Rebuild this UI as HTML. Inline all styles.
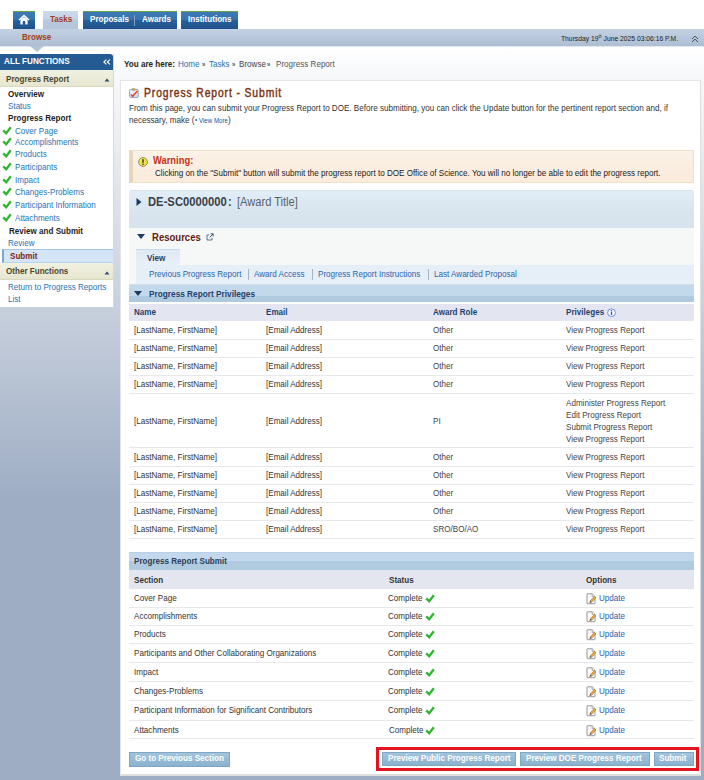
<!DOCTYPE html>
<html><head><meta charset="utf-8">
<style>
*{box-sizing:border-box}
html,body{margin:0;padding:0}
body{width:704px;height:780px;overflow:hidden;position:relative;font-family:"Liberation Sans",sans-serif;font-size:8px;color:#333;
background:linear-gradient(to bottom,#ffffff 0px,#ffffff 46px,#fafbfc 62px,#f5f6f8 90px,#9eadc4 500px,#9eadc4 780px)}
.abs{position:absolute}
.t{position:absolute;white-space:nowrap;line-height:1;transform-origin:0 0}
.b{font-weight:bold}
.lnk{color:#2474b4}
.dark{color:#222}
</style></head>
<body>
<div class="abs" style="left:13px;top:11px;width:22px;height:18px;background:linear-gradient(#3e79b4 0,#3673ae 45%,#28609a 50%,#1f5189 100%);border-top:1px solid #62a646"></div>
<svg class="abs" style="left:18px;top:14px" width="12" height="11" viewBox="0 0 12 11"><path d="M6 0.5 L0.5 5.5 L1.6 6.4 L6 2.4 L10.4 6.4 L11.5 5.5 Z" fill="#fff"/><path d="M2.4 6 L6 2.9 L9.6 6 V10.5 H7.3 V8 A1.3 1.3 0 0 0 4.7 8 V10.5 H2.4 Z" fill="#fff"/></svg>
<div class="abs" style="left:43px;top:11px;width:35px;height:18px;background:linear-gradient(#cbdaec 0,#c3d3e7 45%,#b8c9de 50%,#b4c4da 100%)"></div>
<div class="t b" style="left:49.70px;top:14.00px;font-size:9.50px;transform:scaleX(0.850);color:#a23d1a">Tasks</div>
<div class="abs" style="left:83px;top:11px;width:94px;height:18px;background:linear-gradient(#3e79b4 0,#3673ae 45%,#28609a 50%,#1f5189 100%);border-top:1px solid #62a646"></div>
<div class="t b" style="left:89.70px;top:14.00px;font-size:9.50px;transform:scaleX(0.850);color:#fff">Proposals</div>
<div class="abs" style="left:134px;top:15px;width:1px;height:11px;background:#7fa3c8"></div>
<div class="t b" style="left:141.70px;top:14.00px;font-size:9.50px;transform:scaleX(0.850);color:#fff">Awards</div>
<div class="abs" style="left:181px;top:11px;width:57px;height:18px;background:linear-gradient(#3e79b4 0,#3673ae 45%,#28609a 50%,#1f5189 100%);border-top:1px solid #62a646"></div>
<div class="t b" style="left:188.00px;top:14.00px;font-size:9.50px;transform:scaleX(0.850);color:#fff">Institutions</div>
<div class="abs" style="left:0px;top:29px;width:704px;height:17px;background:linear-gradient(#c3d1e3,#adbed4)"></div>
<div class="abs" style="left:0px;top:46px;width:704px;height:1px;background:#e4e9ef"></div>
<div class="t b" style="left:22.30px;top:32.00px;font-size:9.50px;transform:scaleX(0.850);color:#a23d1a">Browse</div>
<div class="t " style="left:561.00px;top:35.00px;font-size:7.95px;transform:scaleX(0.850);color:#222">Thursday 19<sup style="font-size:4.5px;vertical-align:3px">th</sup> June 2025 03:06:16 P.M.</div>
<svg class="abs" style="left:691px;top:35px" width="8" height="8" viewBox="0 0 8 8"><path d="M1 4 L4 1.2 L7 4 M1 7 L4 4.2 L7 7" stroke="#3a3a3a" stroke-width="0.85" fill="none"/></svg>
<svg class="abs" style="left:30px;top:46px" width="14" height="6" viewBox="0 0 14 6"><path d="M0 0 L14 0 L7 6 Z" fill="#b3c3d8"/></svg>
<div class="abs" style="left:0px;top:54px;width:114px;height:253px;background:#fff;border-right:1px solid #d5d9de"></div>
<div class="abs" style="left:0px;top:54px;width:113px;height:15.5px;background:#245b93;border-top-right-radius:3px"></div>
<div class="t b" style="left:3.75px;top:56.00px;font-size:9.62px;transform:scaleX(0.850);color:#fff">ALL FUNCTIONS</div>
<svg class="abs" style="left:102.5px;top:58.5px" width="8" height="6" viewBox="0 0 8 6"><path d="M3.4 0.6 L0.8 3 L3.4 5.4 M6.9 0.6 L4.3 3 L6.9 5.4" stroke="#fff" stroke-width="1.15" fill="none"/></svg>
<div class="abs" style="left:0px;top:69.5px;width:113px;height:17.8px;background:linear-gradient(#f1f1e1,#e6e6d0);border-bottom:1px solid #d9d9c0"></div>
<div class="t b" style="left:5.60px;top:74.00px;font-size:9.50px;transform:scaleX(0.850);color:#4a4630">Progress Report</div>
<svg class="abs" style="left:103.5px;top:77.5px" width="6" height="4"><path d="M0.5 3.5 L3 0.5 L5.5 3.5Z" fill="#2a4a70"/></svg>
<div class="t b" style="left:8.00px;top:89.00px;font-size:9.50px;transform:scaleX(0.850);color:#1e1e1e">Overview</div>
<div class="t " style="left:8.00px;top:101.00px;font-size:9.50px;transform:scaleX(0.850);color:#2474b4">Status</div>
<div class="t b" style="left:8.00px;top:113.00px;font-size:9.50px;transform:scaleX(0.850);color:#1e1e1e">Progress Report</div>
<div class="t " style="left:15.10px;top:126.00px;font-size:9.50px;transform:scaleX(0.850);color:#2474b4">Cover Page</div>
<svg class="abs" style="left:2px;top:125.6px" width="10" height="9" viewBox="0 0 10 9"><path d="M1.2 4.4 L4.2 7.2 L8.8 1.2" stroke="#2fb52f" stroke-width="2.3" fill="none" stroke-linejoin="miter"/></svg>
<div class="t " style="left:15.10px;top:137.00px;font-size:9.50px;transform:scaleX(0.850);color:#2474b4">Accomplishments</div>
<svg class="abs" style="left:2px;top:137.3px" width="10" height="9" viewBox="0 0 10 9"><path d="M1.2 4.4 L4.2 7.2 L8.8 1.2" stroke="#2fb52f" stroke-width="2.3" fill="none" stroke-linejoin="miter"/></svg>
<div class="t " style="left:15.10px;top:149.00px;font-size:9.50px;transform:scaleX(0.850);color:#2474b4">Products</div>
<svg class="abs" style="left:2px;top:149.2px" width="10" height="9" viewBox="0 0 10 9"><path d="M1.2 4.4 L4.2 7.2 L8.8 1.2" stroke="#2fb52f" stroke-width="2.3" fill="none" stroke-linejoin="miter"/></svg>
<div class="t " style="left:15.10px;top:162.00px;font-size:9.50px;transform:scaleX(0.850);color:#2474b4">Participants</div>
<svg class="abs" style="left:2px;top:161.7px" width="10" height="9" viewBox="0 0 10 9"><path d="M1.2 4.4 L4.2 7.2 L8.8 1.2" stroke="#2fb52f" stroke-width="2.3" fill="none" stroke-linejoin="miter"/></svg>
<div class="t " style="left:15.10px;top:175.00px;font-size:9.50px;transform:scaleX(0.850);color:#2474b4">Impact</div>
<svg class="abs" style="left:2px;top:174.6px" width="10" height="9" viewBox="0 0 10 9"><path d="M1.2 4.4 L4.2 7.2 L8.8 1.2" stroke="#2fb52f" stroke-width="2.3" fill="none" stroke-linejoin="miter"/></svg>
<div class="t " style="left:15.10px;top:187.00px;font-size:9.50px;transform:scaleX(0.850);color:#2474b4">Changes-Problems</div>
<svg class="abs" style="left:2px;top:187.3px" width="10" height="9" viewBox="0 0 10 9"><path d="M1.2 4.4 L4.2 7.2 L8.8 1.2" stroke="#2fb52f" stroke-width="2.3" fill="none" stroke-linejoin="miter"/></svg>
<div class="t " style="left:15.10px;top:200.00px;font-size:9.50px;transform:scaleX(0.850);color:#2474b4">Participant Information</div>
<svg class="abs" style="left:2px;top:199.7px" width="10" height="9" viewBox="0 0 10 9"><path d="M1.2 4.4 L4.2 7.2 L8.8 1.2" stroke="#2fb52f" stroke-width="2.3" fill="none" stroke-linejoin="miter"/></svg>
<div class="t " style="left:15.10px;top:213.00px;font-size:9.50px;transform:scaleX(0.850);color:#2474b4">Attachments</div>
<svg class="abs" style="left:2px;top:212.8px" width="10" height="9" viewBox="0 0 10 9"><path d="M1.2 4.4 L4.2 7.2 L8.8 1.2" stroke="#2fb52f" stroke-width="2.3" fill="none" stroke-linejoin="miter"/></svg>
<div class="t b" style="left:8.50px;top:226.00px;font-size:9.50px;transform:scaleX(0.850);color:#1e1e1e">Review and Submit</div>
<div class="t " style="left:7.70px;top:238.00px;font-size:9.50px;transform:scaleX(0.850);color:#2474b4">Review</div>
<div class="abs" style="left:2px;top:249px;width:111px;height:13.5px;background:#d5e5f8;border-top:1px solid #a9c4e4;border-bottom:1px solid #bcd3ee;border-left:2px solid #7ea6d4"></div>
<div class="t b" style="left:10.20px;top:251.00px;font-size:9.50px;transform:scaleX(0.850);color:#7a1c1c">Submit</div>
<div class="abs" style="left:0px;top:262.5px;width:113px;height:17.5px;background:linear-gradient(#f1f1e1,#e6e6d0);border-bottom:1px solid #d9d9c0"></div>
<div class="t b" style="left:5.50px;top:266.00px;font-size:9.50px;transform:scaleX(0.850);color:#4a4630">Other Functions</div>
<svg class="abs" style="left:103.5px;top:270.5px" width="6" height="4"><path d="M0.5 3.5 L3 0.5 L5.5 3.5Z" fill="#2a4a70"/></svg>
<div class="t " style="left:7.70px;top:282.00px;font-size:9.50px;transform:scaleX(0.850);color:#2474b4">Return to Progress Reports</div>
<div class="t " style="left:7.70px;top:294.00px;font-size:9.50px;transform:scaleX(0.850);color:#2474b4">List</div>
<div class="t b" style="left:124.10px;top:59.00px;font-size:9.50px;transform:scaleX(0.850);color:#222">You are here:</div>
<div class="t " style="left:178.00px;top:59.00px;font-size:9.50px;transform:scaleX(0.850);color:#2474b4">Home</div>
<div class="t " style="left:201.50px;top:59.00px;font-size:9.50px;transform:scaleX(0.850);"><span style="font-size:7px;color:#555;font-weight:bold">&raquo;</span></div>
<div class="t " style="left:209.00px;top:59.00px;font-size:9.50px;transform:scaleX(0.850);color:#2474b4">Tasks</div>
<div class="t " style="left:231.60px;top:59.00px;font-size:9.50px;transform:scaleX(0.850);"><span style="font-size:7px;color:#555;font-weight:bold">&raquo;</span></div>
<div class="t " style="left:239.00px;top:59.00px;font-size:9.50px;transform:scaleX(0.850);color:#444">Browse</div>
<div class="t " style="left:267.00px;top:59.00px;font-size:9.50px;transform:scaleX(0.850);"><span style="font-size:7px;color:#555;font-weight:bold">&raquo;</span></div>
<div class="t " style="left:275.70px;top:59.00px;font-size:9.50px;transform:scaleX(0.850);color:#555">Progress Report</div>
<div class="abs" style="left:120px;top:80px;width:581px;height:696px;background:#fff;border:1px solid rgba(0,0,0,0.10);border-right:1px solid rgba(0,0,0,0.12);border-bottom:2px solid rgba(0,0,0,0.12)"></div>
<svg class="abs" style="left:128.8px;top:88px" width="10" height="10" viewBox="0 0 10 10">
<defs><linearGradient id="cb" x1="0" y1="0" x2="1" y2="1"><stop offset="0" stop-color="#f4f8fd"/><stop offset="1" stop-color="#c8daf0"/></linearGradient></defs>
<rect x="0.6" y="1.4" width="8.6" height="8.2" rx="1" fill="url(#cb)" stroke="#7f9dc8" stroke-width="0.9"/>
<rect x="2.6" y="0.2" width="4" height="2.6" rx="1.1" fill="#bba45e"/>
<path d="M1.9 6.4 L3.7 8.3 L8.4 3.1" stroke="#e4462a" stroke-width="1.5" fill="none"/></svg>
<div class="t" style="left:144.3px;top:87px;font-size:12px;transform:scaleX(0.86);letter-spacing:1.05px;color:#7c3515;-webkit-text-stroke:0.45px #7c3515">Progress Report - Submit</div>
<div class="t " style="left:129.00px;top:103.00px;font-size:9.50px;transform:scaleX(0.850);color:#333">From this page, you can submit your Progress Report to DOE. Before submitting, you can click the Update button for the pertinent report section and, if</div>
<div class="t " style="left:128.75px;top:115.00px;font-size:9.50px;transform:scaleX(0.850);color:#333">necessary, make (</div>
<div class="t " style="left:194.80px;top:117.00px;font-size:7.12px;transform:scaleX(0.850);color:#2a5aa0">&bull;</div>
<div class="t " style="left:199.10px;top:117.00px;font-size:7.24px;transform:scaleX(0.850);color:#22509a">View More</div>
<div class="t " style="left:228.20px;top:115.00px;font-size:9.50px;transform:scaleX(0.850);color:#333">)</div>
<div class="abs" style="left:129px;top:149.5px;width:565px;height:33px;background:linear-gradient(#fbf1e6,#faebdb);border:1px solid #f1dfca;border-left:4px solid #e9d5bd"></div>
<svg class="abs" style="left:138px;top:157px" width="10" height="10" viewBox="0 0 10 10">
<circle cx="5" cy="5" r="4.4" fill="#f2e24a" stroke="#8a8a50" stroke-width="0.9"/>
<rect x="4.3" y="2.2" width="1.4" height="3.6" fill="#333"/><rect x="4.3" y="6.6" width="1.4" height="1.3" fill="#333"/></svg>
<div class="t b" style="left:153.20px;top:155.00px;font-size:11.04px;transform:scaleX(0.850);color:#c33218">Warning:</div>
<div class="t " style="left:155.00px;top:168.00px;font-size:9.50px;transform:scaleX(0.850);color:#222">Clicking on the "Submit" button will submit the progress report to DOE Office of Science. You will no longer be able to edit the progress report.</div>
<div class="abs" style="left:129px;top:190px;width:565px;height:37.5px;background:linear-gradient(#e1eef8 0,#d8e5ef 55%,#d7e3ee 100%);border-top:1px solid #d6e2ec;border-radius:3px 3px 0 0"></div>
<svg class="abs" style="left:136px;top:198px" width="6" height="8" viewBox="0 0 6 8"><path d="M0.5 0 L5.5 4 L0.5 8 Z" fill="#1d3a60"/></svg>
<div class="t b" style="left:148.30px;top:195.00px;font-size:13.24px;transform:scaleX(0.850);color:#3a3f48">DE-SC0000000</div>
<div class="t b" style="left:227.80px;top:195.00px;font-size:13.06px;transform:scaleX(0.850);color:#3a3f48">:</div>
<div class="t " style="left:237.20px;top:195.00px;font-size:13.06px;transform:scaleX(0.850);color:#56606a">[Award Title]</div>
<div class="abs" style="left:129px;top:227.5px;width:565px;height:57px;background:#f6f8f7"></div>
<svg class="abs" style="left:137px;top:234px" width="8" height="5" viewBox="0 0 8 5"><path d="M0 0 L8 0 L4 5 Z" fill="#1d3a60"/></svg>
<div class="t b" style="left:151.50px;top:232.00px;font-size:11.22px;transform:scaleX(0.850);color:#621c0e">Resources</div>
<svg class="abs" style="left:206px;top:233px" width="8" height="8" viewBox="0 0 8 8">
<path d="M3.2 2 H1 V7 H6 V4.8" stroke="#4a6680" stroke-width="0.9" fill="none"/>
<path d="M4.6 0.8 H7.2 V3.4 M7 1 L3.6 4.4" stroke="#3a5a78" stroke-width="1" fill="none"/></svg>
<div class="abs" style="left:136px;top:249px;width:44px;height:16px;background:linear-gradient(#dfe9f4,#e8f0f8);border-top:1px solid #c8daee"></div>
<div class="t b" style="left:147.00px;top:253.00px;font-size:9.50px;transform:scaleX(0.850);color:#2b3d5c">View</div>
<div class="abs" style="left:136px;top:265px;width:558px;height:19px;background:#e6eff8"></div>
<div class="t " style="left:148.60px;top:269.00px;font-size:9.50px;transform:scaleX(0.850);color:#2b64a8">Previous Progress Report</div>
<div class="abs" style="left:248px;top:269px;width:1px;height:11px;background:#a8b4c0"></div>
<div class="t " style="left:254.00px;top:269.00px;font-size:9.50px;transform:scaleX(0.850);color:#2b64a8">Award Access</div>
<div class="abs" style="left:312px;top:269px;width:1px;height:11px;background:#a8b4c0"></div>
<div class="t " style="left:318.40px;top:269.00px;font-size:9.50px;transform:scaleX(0.850);color:#2b64a8">Progress Report Instructions</div>
<div class="abs" style="left:428px;top:269px;width:1px;height:11px;background:#a8b4c0"></div>
<div class="t " style="left:434.30px;top:269.00px;font-size:9.50px;transform:scaleX(0.850);color:#2b64a8">Last Awarded Proposal</div>
<div class="abs" style="left:129px;top:284px;width:565px;height:18px;background:linear-gradient(#c2d8eb 0,#c2d8eb 11px,#afc9df 11px,#afc9df 18px);border-top:1px solid #d5dde5"></div>
<svg class="abs" style="left:134px;top:291px" width="8" height="5" viewBox="0 0 8 5"><path d="M0 0 L8 0 L4 5 Z" fill="#1d3a60"/></svg>
<div class="t b" style="left:149.30px;top:289.00px;font-size:9.73px;transform:scaleX(0.850);color:#22406a">Progress Report Privileges</div>
<div class="abs" style="left:129px;top:303.6px;width:565px;height:17.6px;background:#e3e5f0"></div>
<div class="t b" style="left:134.10px;top:307.00px;font-size:9.50px;transform:scaleX(0.850);color:#1f3f6f">Name</div>
<div class="t b" style="left:265.50px;top:307.00px;font-size:9.50px;transform:scaleX(0.850);color:#1f3f6f">Email</div>
<div class="t b" style="left:432.50px;top:307.00px;font-size:9.50px;transform:scaleX(0.850);color:#1f3f6f">Award Role</div>
<div class="t b" style="left:566.00px;top:307.00px;font-size:9.50px;transform:scaleX(0.850);color:#1f3f6f">Privileges</div>
<svg class="abs" style="left:606.5px;top:308px" width="9" height="9" viewBox="0 0 9 9"><circle cx="4.5" cy="4.7" r="3.9" fill="#f4f6fc" stroke="#6a88dc" stroke-width="0.9"/><rect x="3.9" y="3.7" width="1.2" height="3.4" fill="#2f50b0"/><rect x="3.9" y="2.1" width="1.2" height="1.1" fill="#2f50b0"/></svg>
<div class="abs" style="left:129px;top:339px;width:565px;height:1px;background:#e6e8ea"></div>
<div class="t " style="left:134.10px;top:325.00px;font-size:9.50px;transform:scaleX(0.850);color:#333">[LastName, FirstName]</div>
<div class="t " style="left:265.50px;top:325.00px;font-size:9.50px;transform:scaleX(0.850);color:#333">[Email Address]</div>
<div class="t " style="left:432.50px;top:325.00px;font-size:9.50px;transform:scaleX(0.850);color:#444">Other</div>
<div class="t " style="left:566.00px;top:325.00px;font-size:9.50px;transform:scaleX(0.850);color:#444">View Progress Report</div>
<div class="abs" style="left:129px;top:357px;width:565px;height:1px;background:#e6e8ea"></div>
<div class="t " style="left:134.10px;top:343.00px;font-size:9.50px;transform:scaleX(0.850);color:#333">[LastName, FirstName]</div>
<div class="t " style="left:265.50px;top:343.00px;font-size:9.50px;transform:scaleX(0.850);color:#333">[Email Address]</div>
<div class="t " style="left:432.50px;top:343.00px;font-size:9.50px;transform:scaleX(0.850);color:#444">Other</div>
<div class="t " style="left:566.00px;top:343.00px;font-size:9.50px;transform:scaleX(0.850);color:#444">View Progress Report</div>
<div class="abs" style="left:129px;top:375px;width:565px;height:1px;background:#e6e8ea"></div>
<div class="t " style="left:134.10px;top:361.00px;font-size:9.50px;transform:scaleX(0.850);color:#333">[LastName, FirstName]</div>
<div class="t " style="left:265.50px;top:361.00px;font-size:9.50px;transform:scaleX(0.850);color:#333">[Email Address]</div>
<div class="t " style="left:432.50px;top:361.00px;font-size:9.50px;transform:scaleX(0.850);color:#444">Other</div>
<div class="t " style="left:566.00px;top:361.00px;font-size:9.50px;transform:scaleX(0.850);color:#444">View Progress Report</div>
<div class="abs" style="left:129px;top:393px;width:565px;height:1px;background:#e6e8ea"></div>
<div class="t " style="left:134.10px;top:379.00px;font-size:9.50px;transform:scaleX(0.850);color:#333">[LastName, FirstName]</div>
<div class="t " style="left:265.50px;top:379.00px;font-size:9.50px;transform:scaleX(0.850);color:#333">[Email Address]</div>
<div class="t " style="left:432.50px;top:379.00px;font-size:9.50px;transform:scaleX(0.850);color:#444">Other</div>
<div class="t " style="left:566.00px;top:379.00px;font-size:9.50px;transform:scaleX(0.850);color:#444">View Progress Report</div>
<div class="abs" style="left:129px;top:447px;width:565px;height:1px;background:#e6e8ea"></div>
<div class="t " style="left:134.10px;top:416.00px;font-size:9.50px;transform:scaleX(0.850);color:#333">[LastName, FirstName]</div>
<div class="t " style="left:265.50px;top:416.00px;font-size:9.50px;transform:scaleX(0.850);color:#333">[Email Address]</div>
<div class="t " style="left:432.50px;top:416.00px;font-size:9.50px;transform:scaleX(0.850);color:#444">PI</div>
<div class="t " style="left:566.00px;top:398.00px;font-size:9.50px;transform:scaleX(0.850);color:#444">Administer Progress Report</div>
<div class="t " style="left:566.00px;top:410.00px;font-size:9.50px;transform:scaleX(0.850);color:#444">Edit Progress Report</div>
<div class="t " style="left:566.00px;top:422.00px;font-size:9.50px;transform:scaleX(0.850);color:#444">Submit Progress Report</div>
<div class="t " style="left:566.00px;top:434.00px;font-size:9.50px;transform:scaleX(0.850);color:#444">View Progress Report</div>
<div class="abs" style="left:129px;top:466px;width:565px;height:1px;background:#e6e8ea"></div>
<div class="t " style="left:134.10px;top:452.00px;font-size:9.50px;transform:scaleX(0.850);color:#333">[LastName, FirstName]</div>
<div class="t " style="left:265.50px;top:452.00px;font-size:9.50px;transform:scaleX(0.850);color:#333">[Email Address]</div>
<div class="t " style="left:432.50px;top:452.00px;font-size:9.50px;transform:scaleX(0.850);color:#444">Other</div>
<div class="t " style="left:566.00px;top:452.00px;font-size:9.50px;transform:scaleX(0.850);color:#444">View Progress Report</div>
<div class="abs" style="left:129px;top:484px;width:565px;height:1px;background:#e6e8ea"></div>
<div class="t " style="left:134.10px;top:470.00px;font-size:9.50px;transform:scaleX(0.850);color:#333">[LastName, FirstName]</div>
<div class="t " style="left:265.50px;top:470.00px;font-size:9.50px;transform:scaleX(0.850);color:#333">[Email Address]</div>
<div class="t " style="left:432.50px;top:470.00px;font-size:9.50px;transform:scaleX(0.850);color:#444">Other</div>
<div class="t " style="left:566.00px;top:470.00px;font-size:9.50px;transform:scaleX(0.850);color:#444">View Progress Report</div>
<div class="abs" style="left:129px;top:502px;width:565px;height:1px;background:#e6e8ea"></div>
<div class="t " style="left:134.10px;top:488.00px;font-size:9.50px;transform:scaleX(0.850);color:#333">[LastName, FirstName]</div>
<div class="t " style="left:265.50px;top:488.00px;font-size:9.50px;transform:scaleX(0.850);color:#333">[Email Address]</div>
<div class="t " style="left:432.50px;top:488.00px;font-size:9.50px;transform:scaleX(0.850);color:#444">Other</div>
<div class="t " style="left:566.00px;top:488.00px;font-size:9.50px;transform:scaleX(0.850);color:#444">View Progress Report</div>
<div class="abs" style="left:129px;top:520px;width:565px;height:1px;background:#e6e8ea"></div>
<div class="t " style="left:134.10px;top:506.00px;font-size:9.50px;transform:scaleX(0.850);color:#333">[LastName, FirstName]</div>
<div class="t " style="left:265.50px;top:506.00px;font-size:9.50px;transform:scaleX(0.850);color:#333">[Email Address]</div>
<div class="t " style="left:432.50px;top:506.00px;font-size:9.50px;transform:scaleX(0.850);color:#444">Other</div>
<div class="t " style="left:566.00px;top:506.00px;font-size:9.50px;transform:scaleX(0.850);color:#444">View Progress Report</div>
<div class="abs" style="left:129px;top:538px;width:565px;height:1px;background:#e6e8ea"></div>
<div class="t " style="left:134.10px;top:524.00px;font-size:9.50px;transform:scaleX(0.850);color:#333">[LastName, FirstName]</div>
<div class="t " style="left:265.50px;top:524.00px;font-size:9.50px;transform:scaleX(0.850);color:#333">[Email Address]</div>
<div class="t " style="left:432.50px;top:524.00px;font-size:9.50px;transform:scaleX(0.850);color:#444">SRO/BO/AO</div>
<div class="t " style="left:566.00px;top:524.00px;font-size:9.50px;transform:scaleX(0.850);color:#444">View Progress Report</div>
<div class="abs" style="left:129px;top:552px;width:565px;height:18px;background:linear-gradient(#c3d8ec 0,#c3d8ec 8.5px,#b0cae0 8.5px,#b0cae0 18px);border-top:1px solid #b8d0e6"></div>
<div class="t b" style="left:133.60px;top:556.00px;font-size:9.50px;transform:scaleX(0.850);color:#2c3e58">Progress Report Submit</div>
<div class="abs" style="left:129px;top:570px;width:565px;height:19px;background:#e3e5ef"></div>
<div class="t b" style="left:133.60px;top:575.00px;font-size:9.50px;transform:scaleX(0.850);color:#333">Section</div>
<div class="t b" style="left:388.80px;top:575.00px;font-size:9.50px;transform:scaleX(0.850);color:#333">Status</div>
<div class="t b" style="left:585.70px;top:575.00px;font-size:9.50px;transform:scaleX(0.850);color:#333">Options</div>
<div class="abs" style="left:129px;top:607px;width:565px;height:1px;background:#e6e8ea"></div>
<div class="t " style="left:133.60px;top:593.00px;font-size:9.50px;transform:scaleX(0.850);color:#333">Cover Page</div>
<div class="t " style="left:387.80px;top:593.00px;font-size:9.50px;transform:scaleX(0.850);color:#333">Complete</div>
<svg class="abs" style="left:425px;top:594.0px" width="10" height="9" viewBox="0 0 10 9"><path d="M1.2 4.4 L4.2 7.2 L8.8 1.2" stroke="#2fb52f" stroke-width="2.3" fill="none"/></svg>
<svg class="abs" style="left:585.5px;top:593.0px" width="12" height="12" viewBox="0 0 12 12"><path d="M1 1.3 Q1 0.8 1.5 0.8 H6.2 L9 3.6 V10.2 Q9 10.7 8.5 10.7 H1.5 Q1 10.7 1 10.2 Z" fill="#fafafa" stroke="#8c8c8c" stroke-width="0.9"/><path d="M6.2 0.8 V3.6 H9" stroke="#9a9a9a" stroke-width="0.8" fill="#e8e8e8"/><path d="M4.2 7.8 L8.6 3.4 L10 4.8 L5.6 9.2 Z" fill="#eea63c" stroke="#8a6420" stroke-width="0.5"/><path d="M4.2 7.8 L3.4 10 L5.6 9.2 Z" fill="#5a4a30"/></svg>
<div class="t " style="left:598.60px;top:593.00px;font-size:9.50px;transform:scaleX(0.850);color:#2b64a8">Update</div>
<div class="abs" style="left:129px;top:625px;width:565px;height:1px;background:#e6e8ea"></div>
<div class="t " style="left:133.60px;top:611.00px;font-size:9.50px;transform:scaleX(0.850);color:#333">Accomplishments</div>
<div class="t " style="left:387.80px;top:611.00px;font-size:9.50px;transform:scaleX(0.850);color:#333">Complete</div>
<svg class="abs" style="left:425px;top:612.0px" width="10" height="9" viewBox="0 0 10 9"><path d="M1.2 4.4 L4.2 7.2 L8.8 1.2" stroke="#2fb52f" stroke-width="2.3" fill="none"/></svg>
<svg class="abs" style="left:585.5px;top:611.0px" width="12" height="12" viewBox="0 0 12 12"><path d="M1 1.3 Q1 0.8 1.5 0.8 H6.2 L9 3.6 V10.2 Q9 10.7 8.5 10.7 H1.5 Q1 10.7 1 10.2 Z" fill="#fafafa" stroke="#8c8c8c" stroke-width="0.9"/><path d="M6.2 0.8 V3.6 H9" stroke="#9a9a9a" stroke-width="0.8" fill="#e8e8e8"/><path d="M4.2 7.8 L8.6 3.4 L10 4.8 L5.6 9.2 Z" fill="#eea63c" stroke="#8a6420" stroke-width="0.5"/><path d="M4.2 7.8 L3.4 10 L5.6 9.2 Z" fill="#5a4a30"/></svg>
<div class="t " style="left:598.60px;top:611.00px;font-size:9.50px;transform:scaleX(0.850);color:#2b64a8">Update</div>
<div class="abs" style="left:129px;top:643px;width:565px;height:1px;background:#e6e8ea"></div>
<div class="t " style="left:133.60px;top:629.00px;font-size:9.50px;transform:scaleX(0.850);color:#333">Products</div>
<div class="t " style="left:387.80px;top:629.00px;font-size:9.50px;transform:scaleX(0.850);color:#333">Complete</div>
<svg class="abs" style="left:425px;top:630.0px" width="10" height="9" viewBox="0 0 10 9"><path d="M1.2 4.4 L4.2 7.2 L8.8 1.2" stroke="#2fb52f" stroke-width="2.3" fill="none"/></svg>
<svg class="abs" style="left:585.5px;top:629.0px" width="12" height="12" viewBox="0 0 12 12"><path d="M1 1.3 Q1 0.8 1.5 0.8 H6.2 L9 3.6 V10.2 Q9 10.7 8.5 10.7 H1.5 Q1 10.7 1 10.2 Z" fill="#fafafa" stroke="#8c8c8c" stroke-width="0.9"/><path d="M6.2 0.8 V3.6 H9" stroke="#9a9a9a" stroke-width="0.8" fill="#e8e8e8"/><path d="M4.2 7.8 L8.6 3.4 L10 4.8 L5.6 9.2 Z" fill="#eea63c" stroke="#8a6420" stroke-width="0.5"/><path d="M4.2 7.8 L3.4 10 L5.6 9.2 Z" fill="#5a4a30"/></svg>
<div class="t " style="left:598.60px;top:629.00px;font-size:9.50px;transform:scaleX(0.850);color:#2b64a8">Update</div>
<div class="abs" style="left:129px;top:662px;width:565px;height:1px;background:#e6e8ea"></div>
<div class="t " style="left:133.60px;top:648.00px;font-size:9.50px;transform:scaleX(0.850);color:#333">Participants and Other Collaborating Organizations</div>
<div class="t " style="left:387.80px;top:648.00px;font-size:9.50px;transform:scaleX(0.850);color:#333">Complete</div>
<svg class="abs" style="left:425px;top:649.0px" width="10" height="9" viewBox="0 0 10 9"><path d="M1.2 4.4 L4.2 7.2 L8.8 1.2" stroke="#2fb52f" stroke-width="2.3" fill="none"/></svg>
<svg class="abs" style="left:585.5px;top:648.0px" width="12" height="12" viewBox="0 0 12 12"><path d="M1 1.3 Q1 0.8 1.5 0.8 H6.2 L9 3.6 V10.2 Q9 10.7 8.5 10.7 H1.5 Q1 10.7 1 10.2 Z" fill="#fafafa" stroke="#8c8c8c" stroke-width="0.9"/><path d="M6.2 0.8 V3.6 H9" stroke="#9a9a9a" stroke-width="0.8" fill="#e8e8e8"/><path d="M4.2 7.8 L8.6 3.4 L10 4.8 L5.6 9.2 Z" fill="#eea63c" stroke="#8a6420" stroke-width="0.5"/><path d="M4.2 7.8 L3.4 10 L5.6 9.2 Z" fill="#5a4a30"/></svg>
<div class="t " style="left:598.60px;top:648.00px;font-size:9.50px;transform:scaleX(0.850);color:#2b64a8">Update</div>
<div class="abs" style="left:129px;top:681px;width:565px;height:1px;background:#e6e8ea"></div>
<div class="t " style="left:133.60px;top:667.00px;font-size:9.50px;transform:scaleX(0.850);color:#333">Impact</div>
<div class="t " style="left:387.80px;top:667.00px;font-size:9.50px;transform:scaleX(0.850);color:#333">Complete</div>
<svg class="abs" style="left:425px;top:668.0px" width="10" height="9" viewBox="0 0 10 9"><path d="M1.2 4.4 L4.2 7.2 L8.8 1.2" stroke="#2fb52f" stroke-width="2.3" fill="none"/></svg>
<svg class="abs" style="left:585.5px;top:667.0px" width="12" height="12" viewBox="0 0 12 12"><path d="M1 1.3 Q1 0.8 1.5 0.8 H6.2 L9 3.6 V10.2 Q9 10.7 8.5 10.7 H1.5 Q1 10.7 1 10.2 Z" fill="#fafafa" stroke="#8c8c8c" stroke-width="0.9"/><path d="M6.2 0.8 V3.6 H9" stroke="#9a9a9a" stroke-width="0.8" fill="#e8e8e8"/><path d="M4.2 7.8 L8.6 3.4 L10 4.8 L5.6 9.2 Z" fill="#eea63c" stroke="#8a6420" stroke-width="0.5"/><path d="M4.2 7.8 L3.4 10 L5.6 9.2 Z" fill="#5a4a30"/></svg>
<div class="t " style="left:598.60px;top:667.00px;font-size:9.50px;transform:scaleX(0.850);color:#2b64a8">Update</div>
<div class="abs" style="left:129px;top:700px;width:565px;height:1px;background:#e6e8ea"></div>
<div class="t " style="left:133.60px;top:686.00px;font-size:9.50px;transform:scaleX(0.850);color:#333">Changes-Problems</div>
<div class="t " style="left:387.80px;top:686.00px;font-size:9.50px;transform:scaleX(0.850);color:#333">Complete</div>
<svg class="abs" style="left:425px;top:687.0px" width="10" height="9" viewBox="0 0 10 9"><path d="M1.2 4.4 L4.2 7.2 L8.8 1.2" stroke="#2fb52f" stroke-width="2.3" fill="none"/></svg>
<svg class="abs" style="left:585.5px;top:686.0px" width="12" height="12" viewBox="0 0 12 12"><path d="M1 1.3 Q1 0.8 1.5 0.8 H6.2 L9 3.6 V10.2 Q9 10.7 8.5 10.7 H1.5 Q1 10.7 1 10.2 Z" fill="#fafafa" stroke="#8c8c8c" stroke-width="0.9"/><path d="M6.2 0.8 V3.6 H9" stroke="#9a9a9a" stroke-width="0.8" fill="#e8e8e8"/><path d="M4.2 7.8 L8.6 3.4 L10 4.8 L5.6 9.2 Z" fill="#eea63c" stroke="#8a6420" stroke-width="0.5"/><path d="M4.2 7.8 L3.4 10 L5.6 9.2 Z" fill="#5a4a30"/></svg>
<div class="t " style="left:598.60px;top:686.00px;font-size:9.50px;transform:scaleX(0.850);color:#2b64a8">Update</div>
<div class="abs" style="left:129px;top:720px;width:565px;height:1px;background:#e6e8ea"></div>
<div class="t " style="left:133.60px;top:705.00px;font-size:9.50px;transform:scaleX(0.850);color:#333">Participant Information for Significant Contributors</div>
<div class="t " style="left:387.80px;top:705.00px;font-size:9.50px;transform:scaleX(0.850);color:#333">Complete</div>
<svg class="abs" style="left:425px;top:706.0px" width="10" height="9" viewBox="0 0 10 9"><path d="M1.2 4.4 L4.2 7.2 L8.8 1.2" stroke="#2fb52f" stroke-width="2.3" fill="none"/></svg>
<svg class="abs" style="left:585.5px;top:705.0px" width="12" height="12" viewBox="0 0 12 12"><path d="M1 1.3 Q1 0.8 1.5 0.8 H6.2 L9 3.6 V10.2 Q9 10.7 8.5 10.7 H1.5 Q1 10.7 1 10.2 Z" fill="#fafafa" stroke="#8c8c8c" stroke-width="0.9"/><path d="M6.2 0.8 V3.6 H9" stroke="#9a9a9a" stroke-width="0.8" fill="#e8e8e8"/><path d="M4.2 7.8 L8.6 3.4 L10 4.8 L5.6 9.2 Z" fill="#eea63c" stroke="#8a6420" stroke-width="0.5"/><path d="M4.2 7.8 L3.4 10 L5.6 9.2 Z" fill="#5a4a30"/></svg>
<div class="t " style="left:598.60px;top:705.00px;font-size:9.50px;transform:scaleX(0.850);color:#2b64a8">Update</div>
<div class="abs" style="left:129px;top:738px;width:565px;height:1px;background:#e6e8ea"></div>
<div class="t " style="left:133.60px;top:725.00px;font-size:9.50px;transform:scaleX(0.850);color:#333">Attachments</div>
<div class="t " style="left:388.80px;top:725.00px;font-size:9.50px;transform:scaleX(0.850);color:#333">Complete</div>
<svg class="abs" style="left:425px;top:726.0px" width="10" height="9" viewBox="0 0 10 9"><path d="M1.2 4.4 L4.2 7.2 L8.8 1.2" stroke="#2fb52f" stroke-width="2.3" fill="none"/></svg>
<svg class="abs" style="left:585.5px;top:725.0px" width="12" height="12" viewBox="0 0 12 12"><path d="M1 1.3 Q1 0.8 1.5 0.8 H6.2 L9 3.6 V10.2 Q9 10.7 8.5 10.7 H1.5 Q1 10.7 1 10.2 Z" fill="#fafafa" stroke="#8c8c8c" stroke-width="0.9"/><path d="M6.2 0.8 V3.6 H9" stroke="#9a9a9a" stroke-width="0.8" fill="#e8e8e8"/><path d="M4.2 7.8 L8.6 3.4 L10 4.8 L5.6 9.2 Z" fill="#eea63c" stroke="#8a6420" stroke-width="0.5"/><path d="M4.2 7.8 L3.4 10 L5.6 9.2 Z" fill="#5a4a30"/></svg>
<div class="t " style="left:598.60px;top:725.00px;font-size:9.50px;transform:scaleX(0.850);color:#2b64a8">Update</div>
<div class="abs" style="left:129px;top:752px;width:101px;height:14.5px;background:linear-gradient(#a2c4dc,#8ab2ce);border:1px solid #7fa6c3"></div>
<div class="t b" style="left:134.90px;top:753.00px;font-size:9.50px;transform:scaleX(0.850);color:#ffffff">Go to Previous Section</div>
<div class="abs" style="left:375.5px;top:746.5px;width:323px;height:24.5px;border:3px solid #e3141f"></div>
<div class="abs" style="left:381.7px;top:751.5px;width:134.6px;height:14px;background:linear-gradient(#a2c4dc,#8ab2ce);border:1px solid #7fa6c3"></div>
<div class="t b" style="left:388.00px;top:753.00px;font-size:9.50px;transform:scaleX(0.850);color:#ffffff">Preview Public Progress Report</div>
<div class="abs" style="left:520px;top:751.5px;width:130px;height:14px;background:linear-gradient(#a2c4dc,#8ab2ce);border:1px solid #7fa6c3"></div>
<div class="t b" style="left:526.00px;top:753.00px;font-size:9.50px;transform:scaleX(0.850);color:#ffffff">Preview DOE Progress Report</div>
<div class="abs" style="left:653.6px;top:751.5px;width:40px;height:14px;background:linear-gradient(#a2c4dc,#8ab2ce);border:1px solid #7fa6c3"></div>
<div class="t b" style="left:659.00px;top:753.00px;font-size:9.50px;transform:scaleX(0.850);color:#ffffff">Submit</div>
</body></html>
